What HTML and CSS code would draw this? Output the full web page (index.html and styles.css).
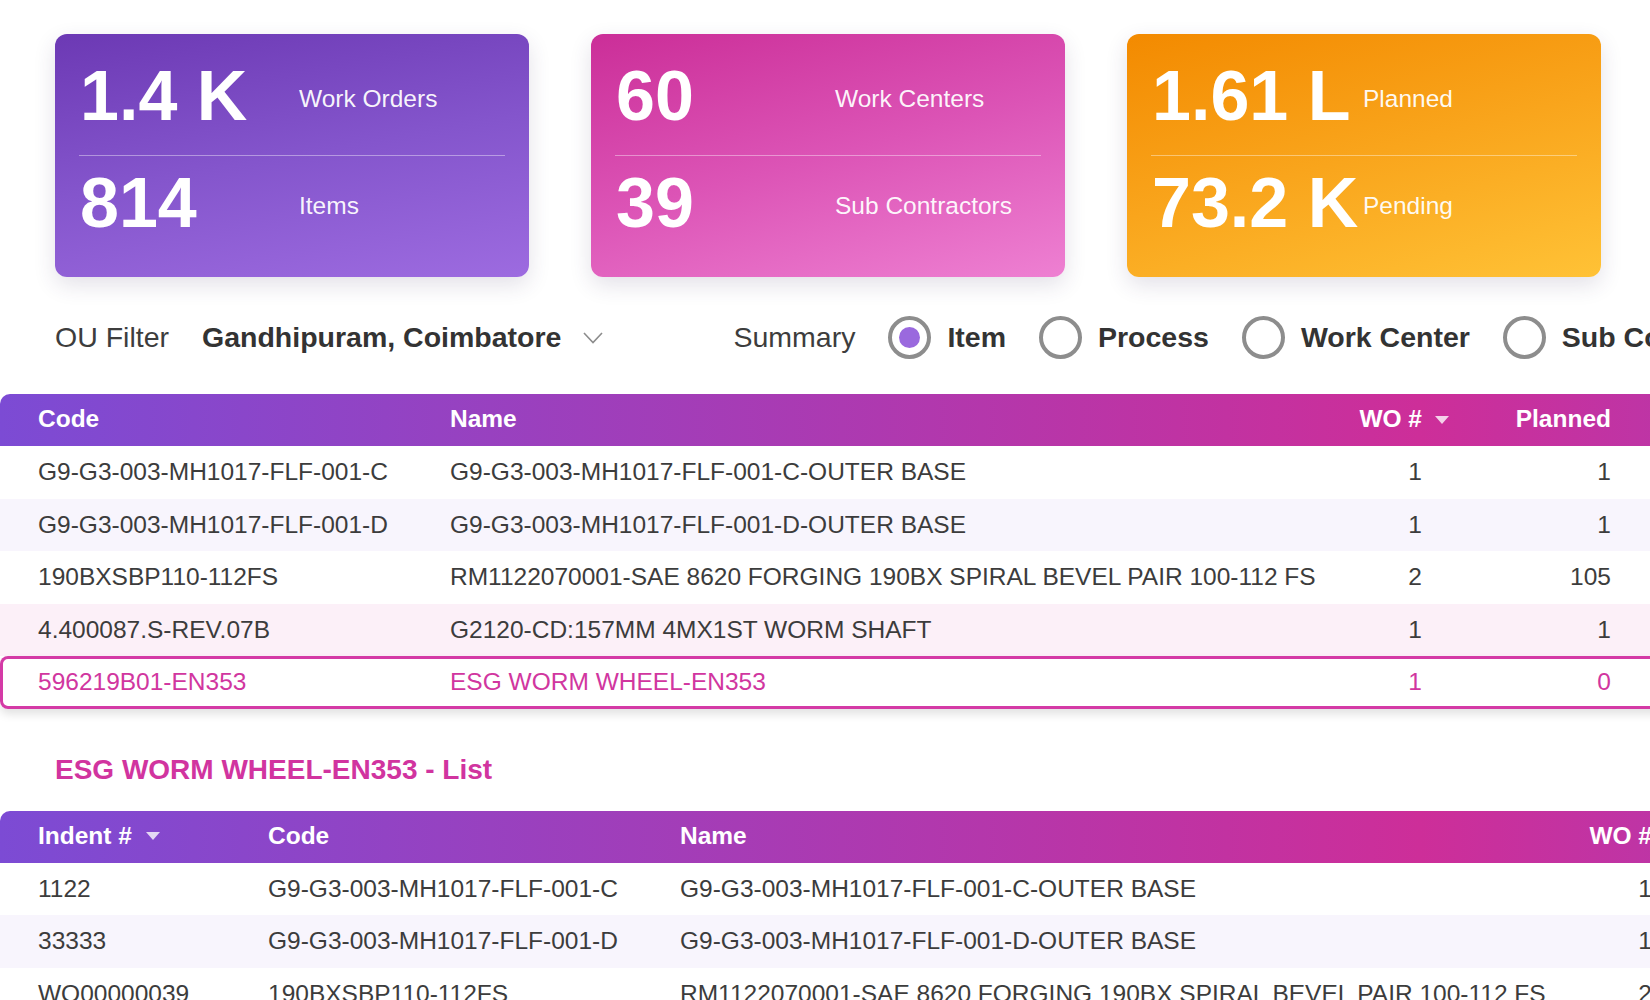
FILE: index.html
```html
<!DOCTYPE html>
<html lang="en">
<head>
<meta charset="utf-8">
<title>Work Order Dashboard</title>
<link rel="stylesheet" href="styles.css">
</head>
<body>
<div class="page">
  <section class="cards">
    <div class="card card-purple">
      <span class="num">1.4 K</span><span class="label">Work Orders</span>
      <div class="divider"></div>
      <span class="num">814</span><span class="label">Items</span>
    </div>
    <div class="card card-pink">
      <span class="num">60</span><span class="label">Work Centers</span>
      <div class="divider"></div>
      <span class="num">39</span><span class="label">Sub Contractors</span>
    </div>
    <div class="card card-orange tight">
      <span class="num">1.61 L</span><span class="label">Planned</span>
      <div class="divider"></div>
      <span class="num">73.2 K</span><span class="label">Pending</span>
    </div>
  </section>

  <div class="filters">
    <span class="f-label">OU Filter</span>
    <span class="f-value">Gandhipuram, Coimbatore</span>
    <svg class="chev" width="20" height="12" viewBox="0 0 20 12"><polyline points="1,1 10,10.5 19,1" fill="none" stroke="#8c8c8c" stroke-width="1.6"/></svg>
    <span class="f-label summary">Summary</span>
    <span class="radio"><span class="dot on"></span><span>Item</span></span>
    <span class="radio"><span class="dot"></span><span>Process</span></span>
    <span class="radio"><span class="dot"></span><span>Work Center</span></span>
    <span class="radio"><span class="dot"></span><span>Sub Contractor</span></span>
  </div>

  <div class="tbl t-items">
    <div class="tr thead">
      <div>Code</div><div>Name</div><div class="nc">WO #<span class="sort sort-r"></span></div><div class="nc">Planned</div><div></div>
    </div>
    <div class="tr">
      <div>G9-G3-003-MH1017-FLF-001-C</div><div>G9-G3-003-MH1017-FLF-001-C-OUTER BASE</div><div class="nc">1</div><div class="nc">1</div><div></div>
    </div>
    <div class="tr alt">
      <div>G9-G3-003-MH1017-FLF-001-D</div><div>G9-G3-003-MH1017-FLF-001-D-OUTER BASE</div><div class="nc">1</div><div class="nc">1</div><div></div>
    </div>
    <div class="tr">
      <div>190BXSBP110-112FS</div><div>RM1122070001-SAE 8620 FORGING 190BX SPIRAL BEVEL PAIR 100-112 FS</div><div class="nc">2</div><div class="nc">105</div><div></div>
    </div>
    <div class="tr hover">
      <div>4.400087.S-REV.07B</div><div>G2120-CD:157MM 4MX1ST WORM SHAFT</div><div class="nc">1</div><div class="nc">1</div><div></div>
    </div>
    <div class="tr selected">
      <div>596219B01-EN353</div><div>ESG WORM WHEEL-EN353</div><div class="nc">1</div><div class="nc">0</div><div></div>
    </div>
  </div>

  <h2 class="list-title">ESG WORM WHEEL-EN353 - List</h2>

  <div class="tbl t-list">
    <div class="tr thead">
      <div>Indent #<span class="sort sort-l"></span></div><div>Code</div><div>Name</div><div class="nc">WO #<span class="sort sort-r"></span></div><div></div>
    </div>
    <div class="tr">
      <div>1122</div><div>G9-G3-003-MH1017-FLF-001-C</div><div>G9-G3-003-MH1017-FLF-001-C-OUTER BASE</div><div class="nc">1</div><div></div>
    </div>
    <div class="tr alt">
      <div>33333</div><div>G9-G3-003-MH1017-FLF-001-D</div><div>G9-G3-003-MH1017-FLF-001-D-OUTER BASE</div><div class="nc">1</div><div></div>
    </div>
    <div class="tr">
      <div>WO00000039</div><div>190BXSBP110-112FS</div><div>RM1122070001-SAE 8620 FORGING 190BX SPIRAL BEVEL PAIR 100-112 FS</div><div class="nc">2</div><div></div>
    </div>
  </div>
</div>
</body>
</html>
```

FILE: styles.css
```css
* { box-sizing: border-box; }
html, body { margin: 0; padding: 0; }
body {
  width: 1650px;
  height: 1000px;
  overflow: hidden;
  background: #fff;
  font-family: "Liberation Sans", Arial, Helvetica, sans-serif;
  color: #3c3c3c;
}
.page { padding-top: 34px; }

/* ---------- stat cards ---------- */
.cards {
  display: grid;
  grid-template-columns: repeat(3, 474px);
  column-gap: 62px;
  padding-left: 55px;
}
.card {
  height: 243px;
  border-radius: 12px;
  padding: 22px 24px 34px;
  display: grid;
  grid-template-columns: 220px 1fr;
  grid-template-rows: 80px auto 80px;
  color: #fff;
  box-shadow: 0 8px 22px rgba(60, 40, 90, 0.14);
}
.card.tight { grid-template-columns: 212px 1fr; }
.card-purple { background: linear-gradient(170deg, #6c39b4 0%, #8455cc 50%, #9d6be0 100%); }
.card-pink { background: linear-gradient(165deg, #cb2e98 0%, #dc54b6 50%, #ee80d2 100%); }
.card-orange { background: linear-gradient(165deg, #f38a00 0%, #f9a51c 50%, #ffc236 100%); }
.num {
  font-size: 70px;
  font-weight: 700;
  line-height: 80px;
  white-space: nowrap;
  align-self: center;
  padding-left: 1px;
}
.label {
  font-size: 24.5px;
  align-self: center;
  padding-top: 6px;
  white-space: nowrap;
  color: rgba(255, 255, 255, 0.95);
}
.divider {
  grid-column: 1 / -1;
  height: 1px;
  background: rgba(255, 255, 255, 0.4);
  margin: 19px 0 7px;
}

/* ---------- filter bar ---------- */
.filters {
  display: flex;
  align-items: center;
  height: 60px;
  margin-top: 30px;
  padding-left: 55px;
  font-size: 28.5px;
  white-space: nowrap;
}
.filters > * { flex-shrink: 0; }
.f-label { color: #3d3d3d; }
.f-value { font-weight: 700; color: #333; margin-left: 33px; }
.chev { margin-left: 22px; margin-top: 2px; }
.summary { margin-left: 130px; }
.radio {
  display: flex;
  align-items: center;
  margin-left: 33px;
  font-weight: 700;
  color: #333;
}
.dot {
  width: 43px;
  height: 43px;
  border: 4px solid #8d8d8d;
  border-radius: 50%;
  margin-right: 16px;
  display: flex;
  align-items: center;
  justify-content: center;
  flex: none;
}
.dot.on::after {
  content: "";
  width: 21px;
  height: 21px;
  border-radius: 50%;
  background: #9a69de;
}

/* ---------- tables ---------- */
.tbl { width: 2000px; }
.t-items { margin-top: 27px; }
.tr {
  display: grid;
  height: 52.5px;
  align-items: center;
  font-size: 24.5px;
}
.t-items .tr { grid-template-columns: 412px 848px 200px 189px 1fr; }
.t-list .tr { grid-template-columns: 230px 412px 838px 210px 1fr; }
.tr > div { padding: 0 38px; white-space: nowrap; }
.tr > .nc { text-align: right; }
.thead {
  height: 52px;
  color: #fff;
  font-weight: 700;
  border-radius: 10px 10px 0 0;
  padding-bottom: 2px;
  background: linear-gradient(90deg, #7c4bd4 0px, #cd2e99 1420px, #a83eb7 2000px);
}
.alt { background: #f8f5fd; }
.hover { background: #fcf0f8; }
.selected {
  color: #d1369f;
  border-radius: 8px;
  box-shadow: inset 0 0 0 3px #d43aa6, 0 5px 10px rgba(0, 0, 0, 0.12);
}
.sort {
  display: inline-block;
  width: 0;
  height: 0;
  border-left: 7px solid transparent;
  border-right: 7px solid transparent;
  border-top: 8px solid rgba(255, 255, 255, 0.78);
  vertical-align: middle;
  position: relative;
  top: -1px;
}
.sort-r { margin-left: 13px; margin-right: -27px; }
.sort-l { margin-left: 14px; }

.list-title {
  font-size: 28px;
  font-weight: 700;
  color: #d1349f;
  line-height: 40px;
  margin: 41px 0 21px 55px;
}
```
